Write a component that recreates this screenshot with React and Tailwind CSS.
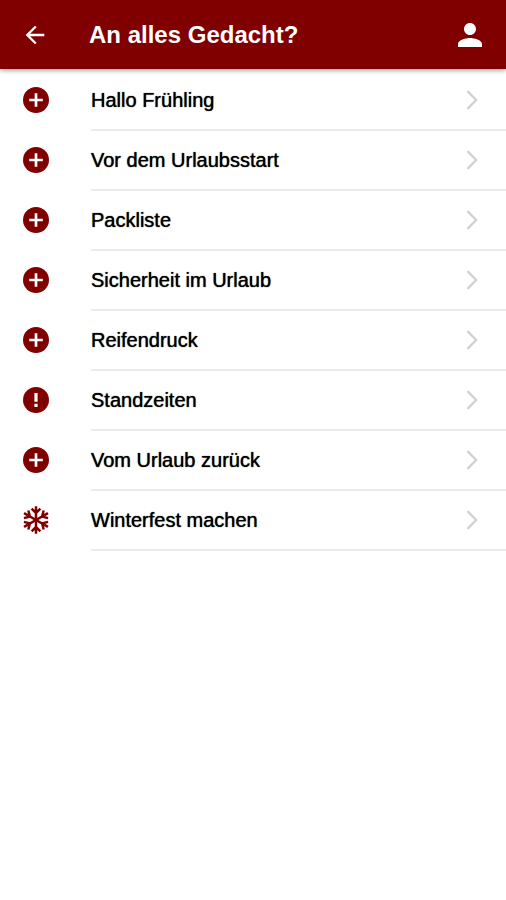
import React from 'react';
import { MdArrowBack, MdPerson } from 'react-icons/md';

const items = [
    { title: 'Hallo Frühling', icon: 'plus' },
    { title: 'Vor dem Urlaubsstart', icon: 'plus' },
    { title: 'Packliste', icon: 'plus' },
    { title: 'Sicherheit im Urlaub', icon: 'plus' },
    { title: 'Reifendruck', icon: 'plus' },
    { title: 'Standzeiten', icon: 'alert' },
    { title: 'Vom Urlaub zurück', icon: 'plus' },
    { title: 'Winterfest machen', icon: 'snow' }
];

const PlusIcon = () => (
    <svg viewBox="0 0 26 26" className="size-[26px]" aria-hidden="true">
        <circle cx="13" cy="13" r="13" fill="#800000" />
        <path d="M13 6.2v13.6M6.2 13h13.6" stroke="#fff" strokeWidth="2.7" />
    </svg>
);

const AlertIcon = () => (
    <svg viewBox="0 0 26 26" className="size-[26px]" aria-hidden="true">
        <circle cx="13" cy="13" r="13" fill="#800000" />
        <path d="M13 6v8.8M13 16.8v3.2" stroke="#fff" strokeWidth="3.2" />
    </svg>
);

// one arm of the flake, turned six times around the centre
const SnowIcon = () => (
    <svg viewBox="0 0 26 28" className="w-[26px] h-7" fill="none" stroke="#800000" strokeWidth="2.5" aria-hidden="true">
        {[0, 60, 120, 180, 240, 300].map(angle => (
            <path key={angle} d="M13 14V0.2M8.6 2.6l4.4 4.4 4.4-4.4" transform={`rotate(${angle} 13 14)`} />
        ))}
    </svg>
);

const icons = { plus: PlusIcon, alert: AlertIcon, snow: SnowIcon };

const Header = () => (
    <header className="relative flex items-center h-[69px] px-[21px] bg-[#800000] text-white shadow-[0_1px_5px_rgba(0,0,0,0.45)]">
        <button type="button" aria-label="Zurück" className="shrink-0">
            <MdArrowBack className="size-7" />
        </button>
        <h1 className="flex-1 ml-10 text-2xl font-bold">An alles Gedacht?</h1>
        <button type="button" aria-label="Profil" className="shrink-0 -mr-[3px]">
            <MdPerson className="size-9" />
        </button>
    </header>
);

const ListItem = ({ title, icon }) => {
    const Icon = icons[icon];
    return (
        <li>
            <a href="#" className="flex h-[60px] pl-[23px]">
                <span className="flex items-center shrink-0 w-[68px] pb-0.5">
                    <Icon />
                </span>
                <span className="flex flex-1 items-center justify-between pr-7 border-b-2 border-[#ebebeb]">
                    <span className="text-xl [text-shadow:0_0_1px_currentColor]">{title}</span>
                    <svg viewBox="0 0 12 20" className="w-3 h-5" fill="none" stroke="#d2d2d2" strokeWidth="2.4" aria-hidden="true">
                        <path d="M1.5 1.2l8.6 8.8-8.6 8.8" />
                    </svg>
                </span>
            </a>
        </li>
    );
};

const App = () => {
    return (
        <div className="min-h-screen bg-white text-black font-['Liberation_Sans',Arial,sans-serif]">
            <Header />
            <main>
                <ul className="pt-0.5">
                    {items.map(item => (
                        <ListItem key={item.title} title={item.title} icon={item.icon} />
                    ))}
                </ul>
            </main>
        </div>
    );
};

export default App;
